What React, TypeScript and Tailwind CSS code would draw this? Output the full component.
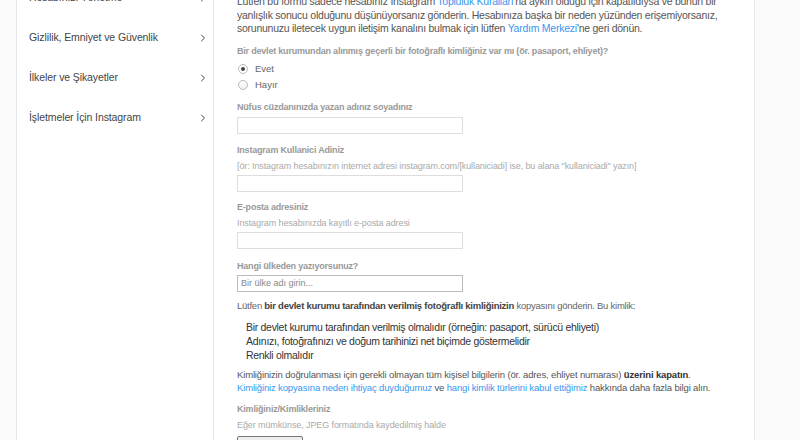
import { ChevronRight } from "lucide-react";

const sideItems = [
  "Hesabınızı Yönetme",
  "Gizlilik, Emniyet ve Güvenlik",
  "İlkeler ve Şikayetler",
  "İşletmeler İçin Instagram",
];

const Label = ({ children }: { children: React.ReactNode }) => (
  <div className="text-[9px] font-bold leading-[12px] tracking-[-0.2px] text-[#999]">{children}</div>
);

const Hint = ({ children }: { children: React.ReactNode }) => (
  <div className="mt-[4px] text-[9px] leading-[12px] tracking-[-0.1px] text-[#aaa]">{children}</div>
);

const Field = ({ placeholder, dark }: { placeholder?: string; dark?: boolean }) => (
  <div
    className={`h-[17px] w-[226px] border bg-white px-[3px] text-[9px] leading-[15px] text-[#888] ${
      dark ? "border-[#bbb]" : "border-[#ddd]"
    }`}
  >
    {placeholder}
  </div>
);

const App = () => {
  return (
    <div
      className="flex h-[440px] w-[800px] overflow-hidden bg-[#fafafa]"
      style={{ fontFamily: '"Liberation Sans", Arial, sans-serif' }}
    >
      <div className="ml-[16px] w-[198px] shrink-0 border-x border-[#e6e6e6] bg-white">
        <div className="-mt-[22px] flex flex-col">
          {sideItems.map((item) => (
            <div key={item} className="flex h-[40px] items-center justify-between pl-[12px] pr-[4px]">
              <span className="text-[10.5px] tracking-[-0.1px] text-[#444]">{item}</span>
              <ChevronRight size={12} strokeWidth={2} className="text-[#444]" />
            </div>
          ))}
        </div>
      </div>

      <div className="w-[541px] shrink-0 border-r border-[#e6e6e6] bg-white pl-[23px] pr-[20px]">
        <div className="-mt-[5px] whitespace-nowrap text-[10.5px] leading-[13.5px] tracking-[-0.25px] text-[#555]">
          Lütfen bu formu sadece hesabınız Instagram{" "}
          <span className="text-[#3897f0]">Topluluk Kuralları</span>'na aykırı olduğu için kapatıldıysa ve bunun bir
          <br />
          yanlışlık sonucu olduğunu düşünüyorsanız gönderin. Hesabınıza başka bir neden yüzünden erişemiyorsanız,
          <br />
          sorununuzu iletecek uygun iletişim kanalını bulmak için lütfen{" "}
          <span className="text-[#3897f0]">Yardım Merkezi</span>'ne geri dönün.
        </div>

        <div className="mt-[9px]">
          <Label>Bir devlet kurumundan alınmış geçerli bir fotoğraflı kimliğiniz var mı (ör. pasaport, ehliyet)?</Label>
          <div className="mt-[7px] flex flex-col gap-[5px] pl-[1px]">
            <div className="flex h-[11px] items-center gap-[7px]">
              <span className="flex h-[10px] w-[10px] items-center justify-center rounded-full border border-[#bbb] bg-white">
                <span className="h-[4px] w-[4px] rounded-full bg-[#444]" />
              </span>
              <span className="text-[9.5px] text-[#666]">Evet</span>
            </div>
            <div className="flex h-[11px] items-center gap-[7px]">
              <span className="h-[10px] w-[10px] rounded-full border border-[#bbb] bg-gradient-to-b from-white to-[#eee]" />
              <span className="text-[9.5px] text-[#666]">Hayır</span>
            </div>
          </div>
        </div>

        <div className="mt-[10px]">
          <Label>Nüfus cüzdanınızda yazan adınız soyadınız</Label>
          <div className="mt-[4px]">
            <Field />
          </div>
        </div>

        <div className="mt-[10px]">
          <Label>Instagram Kullanici Adiniz</Label>
          <Hint>[ör: Instagram hesabınızın internet adresi instagram.com/[kullaniciadi] ise, bu alana "kullaniciadi" yazın]</Hint>
          <div className="mt-[3px]">
            <Field />
          </div>
        </div>

        <div className="mt-[9px]">
          <Label>E-posta adresiniz</Label>
          <Hint>Instagram hesabınızda kayıtlı e-posta adresi</Hint>
          <div className="mt-[3px]">
            <Field />
          </div>
        </div>

        <div className="mt-[11px]">
          <Label>Hangi ülkeden yazıyorsunuz?</Label>
          <div className="mt-[3px]">
            <Field placeholder="Bir ülke adı girin..." dark />
          </div>
        </div>

        <div className="mt-[7px] text-[9.5px] leading-[13px] tracking-[-0.25px] text-[#666]">
          Lütfen <b className="text-[#444]">bir devlet kurumu tarafından verilmiş fotoğraflı kimliğinizin</b> kopyasını
          gönderin. Bu kimlik:
        </div>

        <div className="mt-[8px] flex flex-col pl-[9px] text-[10.5px] leading-[14px] tracking-[-0.3px] text-[#333]">
          <div>Bir devlet kurumu tarafından verilmiş olmalıdır (örneğin: pasaport, sürücü ehliyeti)</div>
          <div>Adınızı, fotoğrafınızı ve doğum tarihinizi net biçimde göstermelidir</div>
          <div>Renkli olmalıdır</div>
        </div>

        <div className="mt-[6px] whitespace-nowrap text-[9.5px] leading-[13px] tracking-[-0.15px] text-[#555]">
          Kimliğinizin doğrulanması için gerekli olmayan tüm kişisel bilgilerin (ör. adres, ehliyet numarası){" "}
          <b className="text-[#333]">üzerini kapatın</b>.
          <br />
          <span className="text-[#3897f0]">Kimliğiniz kopyasına neden ihtiyaç duyduğumuz</span> ve{" "}
          <span className="text-[#3897f0]">hangi kimlik türlerini kabul ettiğimiz</span> hakkında daha fazla bilgi alın.
        </div>

        <div className="mt-[9px]">
          <Label>Kimliğiniz/Kimlikleriniz</Label>
          <Hint>Eğer mümkünse, JPEG formatında kaydedilmiş halde</Hint>
          <div className="mt-[3px] inline-block rounded-[2px] border border-[#777] bg-[#eee] px-[9px] text-[9.5px] leading-[16px] text-[#222]">
            Dosya Seç
          </div>
        </div>
      </div>
    </div>
  );
};

export default App;
